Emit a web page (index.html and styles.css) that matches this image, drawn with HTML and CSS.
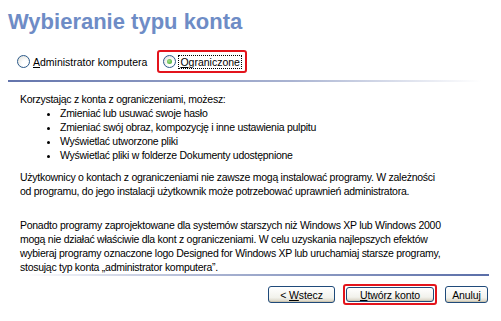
FILE: index.html
```html
<!DOCTYPE html>
<html lang="pl">
<head>
<meta charset="UTF-8" />
<title>Wybieranie typu konta</title>
<link rel="stylesheet" href="styles.css">
</head>
<body>
  <main class="page">
    <h1 class="title">Wybieranie typu konta</h1>

    <div class="choices">
      <label class="choice">
        <span class="radio"></span>
        <span><u>A</u>dministrator komputera</span>
      </label>
      <label class="choice marked">
        <span class="radio checked"></span>
        <span class="focus"><u>O</u>graniczone</span>
      </label>
    </div>

    <hr class="line-top">

    <section class="info">
      <p>Korzystając z konta z ograniczeniami, możesz:</p>
      <ul class="list">
        <li>Zmieniać lub usuwać swoje hasło</li>
        <li>Zmieniać swój obraz, kompozycję i inne ustawienia pulpitu</li>
        <li>Wyświetlać utworzone pliki</li>
        <li>Wyświetlać pliki w folderze Dokumenty udostępnione</li>
      </ul>
      <p class="para">Użytkownicy o kontach z ograniczeniami nie zawsze mogą instalować programy. W zależności<br>od programu, do jego instalacji użytkownik może potrzebować uprawnień administratora.</p>
      <p class="para wide">Ponadto programy zaprojektowane dla systemów starszych niż Windows XP lub Windows 2000<br>mogą nie działać właściwie dla kont z ograniczeniami. W celu uzyskania najlepszych efektów<br>wybieraj programy oznaczone logo Designed for Windows XP lub uruchamiaj starsze programy,<br>stosując typ konta „administrator komputera”.</p>
    </section>

    <hr class="line-bottom">

    <div class="buttons">
      <button class="btn back">&lt; <u>W</u>stecz</button>
      <span class="marked btn-mark"><button class="btn create"><u>U</u>twórz konto</button></span>
      <button class="btn cancel">Anuluj</button>
    </div>
  </main>
</body>
</html>
```

FILE: styles.css
```css
html {
  margin: 0;
  padding: 0;
}

body {
  margin: 0;
  background-color: #ffffff;
  font-family: "Liberation Sans", Arial, sans-serif;
  font-size: 10.5px;
  letter-spacing: -0.27px;
  color: #000000;
}

.page {
  padding: 8px 0 0 0;
}

.title {
  margin: 0 0 0 8px;
  font-family: "Liberation Sans", Arial, sans-serif;
  font-size: 22px;
  line-height: 28px;
  letter-spacing: 0;
  font-weight: bold;
  color: #6e8cc6;
}

.choices {
  display: flex;
  align-items: center;
  gap: 6px;
  margin: 14px 0 0 13px;
  height: 23px;
  letter-spacing: 0;
}

.choice {
  display: flex;
  align-items: center;
  gap: 3px;
  padding: 0 4px;
  height: 19px;
}

.marked {
  border: 2px solid #e3141c;
  border-radius: 3px;
}

.radio {
  width: 11px;
  height: 11px;
  border: 1px solid #2c5a8a;
  border-radius: 50%;
  background: radial-gradient(circle at 65% 70%, #ffffff 30%, #dcdcd4 100%);
  display: flex;
  align-items: center;
  justify-content: center;
}

.radio.checked::after {
  content: "";
  width: 5px;
  height: 5px;
  border-radius: 50%;
  background: radial-gradient(circle at 40% 40%, #a6e08a, #33a226);
}

.focus {
  outline: 1px dotted #000000;
  padding: 0 1px;
}

.line-top {
  margin: 7px 20px 0 8px;
  border: none;
  height: 2px;
  background: linear-gradient(to right, #6374ac, #aab4d2 60%, #ffffff);
}

.info {
  padding: 10px 0 0 20px;
  line-height: 14px;
  white-space: nowrap;
}

.info p {
  margin: 0;
}

.list {
  margin: 0;
  padding: 0 0 0 40px;
  list-style: disc;
}

.info .para {
  margin-top: 8px;
}

.info .para.wide {
  margin-top: 20px;
}

.line-bottom {
  margin: 0 12px 0 22px;
  border: none;
  height: 2px;
  background: linear-gradient(to right, #ffffff, #aab4d2 40%, #5a6ea8);
}

.buttons {
  display: flex;
  justify-content: flex-end;
  align-items: center;
  gap: 8px;
  padding: 8px 13px 0 0;
}

.btn {
  font-family: "Liberation Sans", Arial, sans-serif;
  font-size: 10.5px;
  letter-spacing: -0.1px;
  color: #000000;
  height: 17px;
  padding: 0;
  border: 1px solid #1f4a7a;
  border-radius: 3px;
  background: linear-gradient(#ffffff, #f2f2ec 70%, #d6d0c0);
  box-shadow: inset 0 -1px 0 #cdc6b0;
}

.back {
  width: 67px;
}

.btn-mark {
  display: flex;
  padding: 0 1px;
  height: 17px;
  align-items: center;
}

.create {
  width: 88px;
  height: 15px;
}

.cancel {
  width: 43px;
}
```
